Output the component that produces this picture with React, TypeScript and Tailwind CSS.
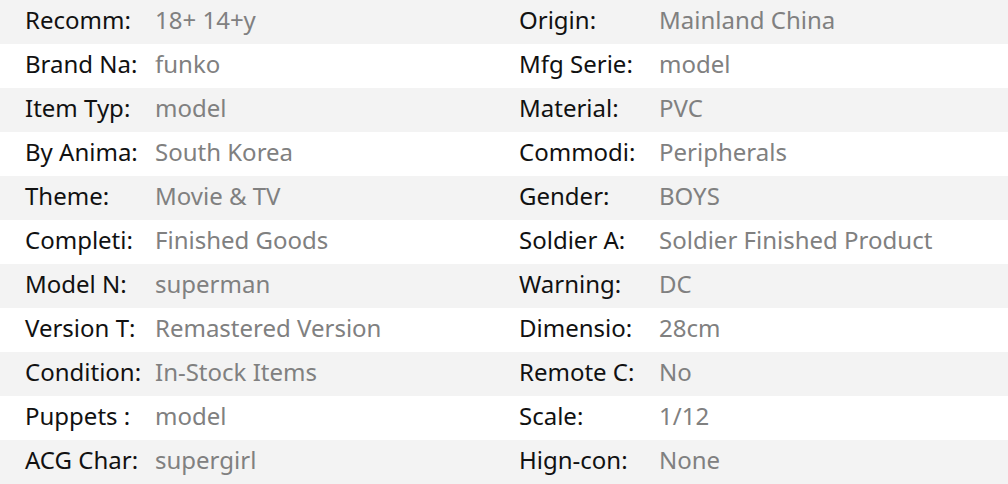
import React from "react";

const rows: [string, string, string, string][] = [
  ["Recomm:", "18+ 14+y", "Origin:", "Mainland China"],
  ["Brand Na:", "funko", "Mfg Serie:", "model"],
  ["Item Typ:", "model", "Material:", "PVC"],
  ["By Anima:", "South Korea", "Commodi:", "Peripherals"],
  ["Theme:", "Movie & TV", "Gender:", "BOYS"],
  ["Completi:", "Finished Goods", "Soldier A:", "Soldier Finished Product"],
  ["Model N:", "superman", "Warning:", "DC"],
  ["Version T:", "Remastered Version", "Dimensio:", "28cm"],
  ["Condition:", "In-Stock Items", "Remote C:", "No"],
  ["Puppets :", "model", "Scale:", "1/12"],
  ["ACG Char:", "supergirl", "Hign-con:", "None"],
];

export default function App() {
  return (
    <div
      className="w-[1008px] h-[484px] bg-white text-[24px] leading-[40px]"
      style={{ fontFamily: '"Noto Sans", "Open Sans", sans-serif' }}
    >
      {rows.map((r, i) => (
        <div
          key={i}
          className={`flex h-[44px] ${i % 2 === 0 ? "bg-[#f3f3f3]" : "bg-white"}`}
        >
          <div className="flex w-[504px] pl-[25px]">
            <div className="w-[130px] text-[#111111] whitespace-nowrap">{r[0]}</div>
            <div className="text-[#808080] whitespace-nowrap">{r[1]}</div>
          </div>
          <div className="flex w-[504px] pl-[15px]">
            <div className="w-[140px] text-[#111111] whitespace-nowrap">{r[2]}</div>
            <div className="text-[#808080] whitespace-nowrap">{r[3]}</div>
          </div>
        </div>
      ))}
    </div>
  );
}
